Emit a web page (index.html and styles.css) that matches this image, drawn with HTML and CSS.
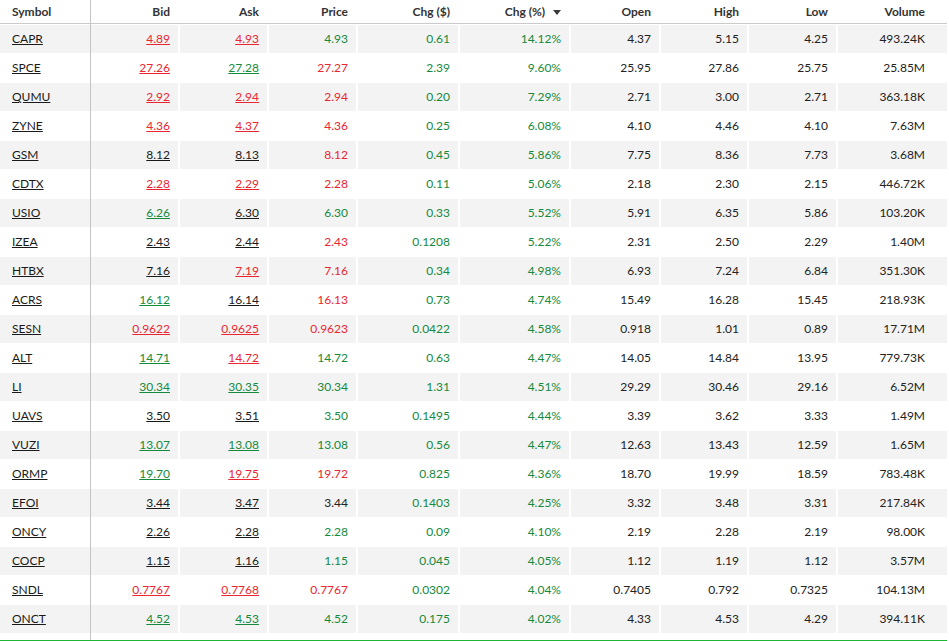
FILE: index.html
```html
<!DOCTYPE html>
<html lang="en">
<head>
<meta charset="utf-8">
<title>Top Gainers</title>
<link rel="stylesheet" href="styles.css">
</head>
<body>
<div class="quotes">
<table class="qt">
<colgroup>
<col class="w-sym"><col class="w-bid"><col class="w-ask"><col class="w-price"><col class="w-chg"><col class="w-pct"><col class="w-open"><col class="w-high"><col class="w-low"><col class="w-vol">
</colgroup>
<thead>
<tr>
<th class="sym">Symbol</th><th>Bid</th><th>Ask</th><th>Price</th><th>Chg ($)</th><th class="sorted">Chg (%) <svg class="arrow" width="8" height="5" viewBox="0 0 8 5"><path d="M0 0H8L4 5Z"/></svg></th><th>Open</th><th>High</th><th>Low</th><th class="vol">Volume</th>
</tr>
</thead>
<tbody>
<tr><td class="sym"><a href="#">CAPR</a></td><td class="first"><a class="r" href="#">4.89</a></td><td><a class="r" href="#">4.93</a></td><td class="g">4.93</td><td class="g">0.61</td><td class="g">14.12%</td><td>4.37</td><td>5.15</td><td>4.25</td><td class="vol">493.24K</td></tr>
<tr><td class="sym"><a href="#">SPCE</a></td><td class="first"><a class="r" href="#">27.26</a></td><td><a class="g" href="#">27.28</a></td><td class="r">27.27</td><td class="g">2.39</td><td class="g">9.60%</td><td>25.95</td><td>27.86</td><td>25.75</td><td class="vol">25.85M</td></tr>
<tr><td class="sym"><a href="#">QUMU</a></td><td class="first"><a class="r" href="#">2.92</a></td><td><a class="r" href="#">2.94</a></td><td class="r">2.94</td><td class="g">0.20</td><td class="g">7.29%</td><td>2.71</td><td>3.00</td><td>2.71</td><td class="vol">363.18K</td></tr>
<tr><td class="sym"><a href="#">ZYNE</a></td><td class="first"><a class="r" href="#">4.36</a></td><td><a class="r" href="#">4.37</a></td><td class="r">4.36</td><td class="g">0.25</td><td class="g">6.08%</td><td>4.10</td><td>4.46</td><td>4.10</td><td class="vol">7.63M</td></tr>
<tr><td class="sym"><a href="#">GSM</a></td><td class="first"><a href="#">8.12</a></td><td><a href="#">8.13</a></td><td class="r">8.12</td><td class="g">0.45</td><td class="g">5.86%</td><td>7.75</td><td>8.36</td><td>7.73</td><td class="vol">3.68M</td></tr>
<tr><td class="sym"><a href="#">CDTX</a></td><td class="first"><a class="r" href="#">2.28</a></td><td><a class="r" href="#">2.29</a></td><td class="r">2.28</td><td class="g">0.11</td><td class="g">5.06%</td><td>2.18</td><td>2.30</td><td>2.15</td><td class="vol">446.72K</td></tr>
<tr><td class="sym"><a href="#">USIO</a></td><td class="first"><a class="g" href="#">6.26</a></td><td><a href="#">6.30</a></td><td class="g">6.30</td><td class="g">0.33</td><td class="g">5.52%</td><td>5.91</td><td>6.35</td><td>5.86</td><td class="vol">103.20K</td></tr>
<tr><td class="sym"><a href="#">IZEA</a></td><td class="first"><a href="#">2.43</a></td><td><a href="#">2.44</a></td><td class="r">2.43</td><td class="g">0.1208</td><td class="g">5.22%</td><td>2.31</td><td>2.50</td><td>2.29</td><td class="vol">1.40M</td></tr>
<tr><td class="sym"><a href="#">HTBX</a></td><td class="first"><a href="#">7.16</a></td><td><a class="r" href="#">7.19</a></td><td class="r">7.16</td><td class="g">0.34</td><td class="g">4.98%</td><td>6.93</td><td>7.24</td><td>6.84</td><td class="vol">351.30K</td></tr>
<tr><td class="sym"><a href="#">ACRS</a></td><td class="first"><a class="g" href="#">16.12</a></td><td><a href="#">16.14</a></td><td class="r">16.13</td><td class="g">0.73</td><td class="g">4.74%</td><td>15.49</td><td>16.28</td><td>15.45</td><td class="vol">218.93K</td></tr>
<tr><td class="sym"><a href="#">SESN</a></td><td class="first"><a class="r" href="#">0.9622</a></td><td><a class="r" href="#">0.9625</a></td><td class="r">0.9623</td><td class="g">0.0422</td><td class="g">4.58%</td><td>0.918</td><td>1.01</td><td>0.89</td><td class="vol">17.71M</td></tr>
<tr><td class="sym"><a href="#">ALT</a></td><td class="first"><a class="g" href="#">14.71</a></td><td><a class="r" href="#">14.72</a></td><td class="g">14.72</td><td class="g">0.63</td><td class="g">4.47%</td><td>14.05</td><td>14.84</td><td>13.95</td><td class="vol">779.73K</td></tr>
<tr><td class="sym"><a href="#">LI</a></td><td class="first"><a class="g" href="#">30.34</a></td><td><a class="g" href="#">30.35</a></td><td class="g">30.34</td><td class="g">1.31</td><td class="g">4.51%</td><td>29.29</td><td>30.46</td><td>29.16</td><td class="vol">6.52M</td></tr>
<tr><td class="sym"><a href="#">UAVS</a></td><td class="first"><a href="#">3.50</a></td><td><a href="#">3.51</a></td><td class="g">3.50</td><td class="g">0.1495</td><td class="g">4.44%</td><td>3.39</td><td>3.62</td><td>3.33</td><td class="vol">1.49M</td></tr>
<tr><td class="sym"><a href="#">VUZI</a></td><td class="first"><a class="g" href="#">13.07</a></td><td><a class="g" href="#">13.08</a></td><td class="g">13.08</td><td class="g">0.56</td><td class="g">4.47%</td><td>12.63</td><td>13.43</td><td>12.59</td><td class="vol">1.65M</td></tr>
<tr><td class="sym"><a href="#">ORMP</a></td><td class="first"><a class="g" href="#">19.70</a></td><td><a class="r" href="#">19.75</a></td><td class="r">19.72</td><td class="g">0.825</td><td class="g">4.36%</td><td>18.70</td><td>19.99</td><td>18.59</td><td class="vol">783.48K</td></tr>
<tr><td class="sym"><a href="#">EFOI</a></td><td class="first"><a href="#">3.44</a></td><td><a href="#">3.47</a></td><td>3.44</td><td class="g">0.1403</td><td class="g">4.25%</td><td>3.32</td><td>3.48</td><td>3.31</td><td class="vol">217.84K</td></tr>
<tr><td class="sym"><a href="#">ONCY</a></td><td class="first"><a href="#">2.26</a></td><td><a href="#">2.28</a></td><td class="g">2.28</td><td class="g">0.09</td><td class="g">4.10%</td><td>2.19</td><td>2.28</td><td>2.19</td><td class="vol">98.00K</td></tr>
<tr><td class="sym"><a href="#">COCP</a></td><td class="first"><a href="#">1.15</a></td><td><a href="#">1.16</a></td><td class="g">1.15</td><td class="g">0.045</td><td class="g">4.05%</td><td>1.12</td><td>1.19</td><td>1.12</td><td class="vol">3.57M</td></tr>
<tr><td class="sym"><a href="#">SNDL</a></td><td class="first"><a class="r" href="#">0.7767</a></td><td><a class="r" href="#">0.7768</a></td><td class="r">0.7767</td><td class="g">0.0302</td><td class="g">4.04%</td><td>0.7405</td><td>0.792</td><td>0.7325</td><td class="vol">104.13M</td></tr>
<tr><td class="sym"><a href="#">ONCT</a></td><td class="first"><a class="g" href="#">4.52</a></td><td><a class="g" href="#">4.53</a></td><td class="g">4.52</td><td class="g">0.175</td><td class="g">4.02%</td><td>4.33</td><td>4.53</td><td>4.29</td><td class="vol">394.11K</td></tr>
<tr class="spacer"><td class="sym"></td><td colspan="9"></td></tr>
</tbody>
</table>
</div>
</body>
</html>
```

FILE: styles.css
```css
html, body {
  margin: 0;
  padding: 0;
  background: #fff;
}

body {
  font-family: Lato, "Open Sans", "Liberation Sans", sans-serif;
  font-size: 12px;
  color: #222;
}

.quotes {
  width: 947px;
}

.qt {
  width: 947px;
  table-layout: fixed;
  border-collapse: separate;
  border-spacing: 0;
  border-bottom: 1px solid #1fb534;
}

.w-sym { width: 91px; }
.w-bid { width: 87px; }
.w-ask { width: 89px; }
.w-price { width: 89px; }
.w-chg { width: 102px; }
.w-pct { width: 111px; }
.w-open { width: 90px; }
.w-high { width: 88px; }
.w-low { width: 89px; }
.w-vol { width: 111px; }

.qt th,
.qt td {
  box-sizing: border-box;
  text-align: right;
  padding: 0 8px 0 0;
  white-space: nowrap;
  overflow: hidden;
}

.qt th {
  height: 24px;
  font-weight: 700;
  color: #333;
  border-bottom: 1px solid #cacaca;
  vertical-align: middle;
}

.qt td {
  height: 29px;
  vertical-align: middle;
  border-left: 2px solid #fff;
}

.qt td.first {
  border-left: 0;
}

.qt .sym {
  text-align: left;
  padding: 0 0 0 12px;
  border-right: 1px solid #c4c4c4;
}

.qt td.sym {
  border-left: 0;
}

.qt .vol {
  padding-right: 22px;
}

.qt tbody tr:nth-child(odd):not(.spacer) td {
  background: linear-gradient(to bottom, #fff 1px, #f3f3f3 1px);
}

.qt tr.spacer td {
  height: 7px;
  border-left: 0;
  padding: 0;
}

.qt td.sym + td,
.qt th.sym + th {
  border-left: 0;
}

.sorted .arrow {
  margin-left: 5px;
  vertical-align: 1px;
  fill: #3a3a3a;
}

a {
  color: #1a1a1a;
  text-decoration: underline;
}

.r { color: #ea2630; }
.g { color: #168a3c; }
a.r { color: #ea2630; }
a.g { color: #168a3c; }
```
